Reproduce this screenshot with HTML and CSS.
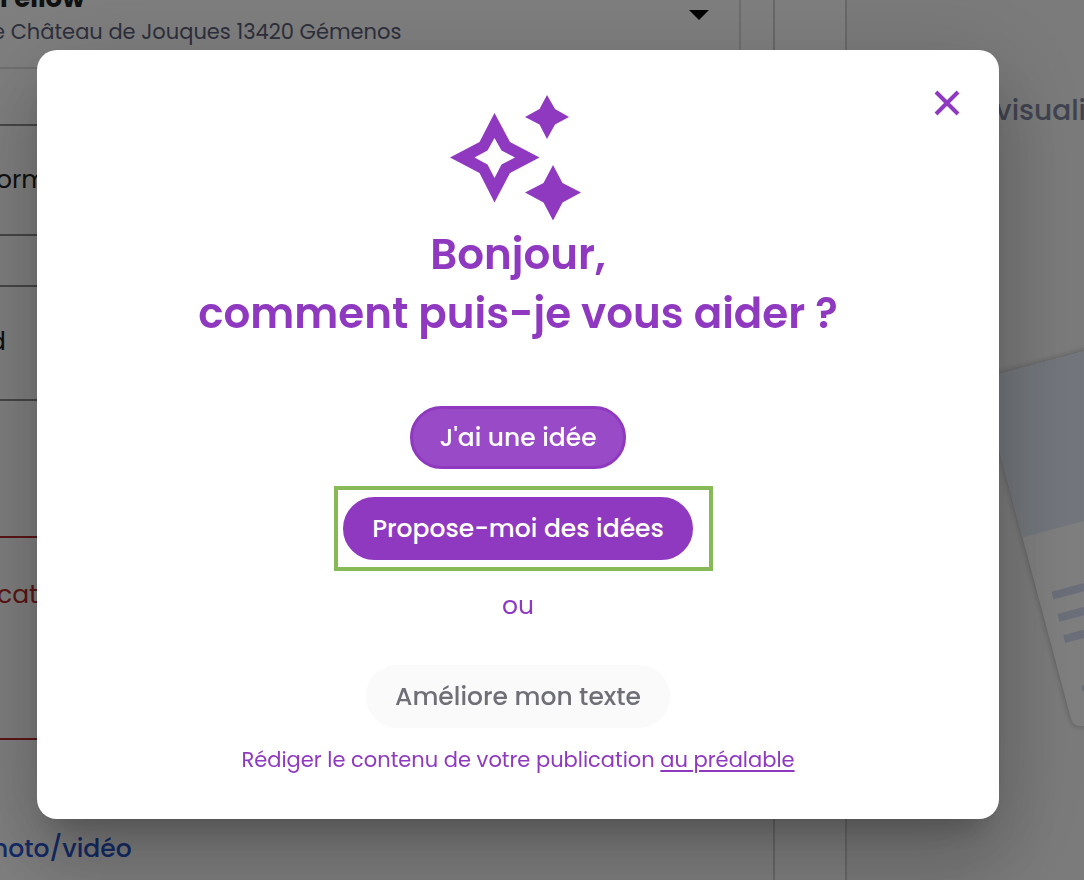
FILE: index.html
```
<!DOCTYPE html>
<html lang="fr">
<head>
  <meta charset="UTF-8">
  <title>Assistant de publication</title>
  <meta name="viewport" content="width=device-width, initial-scale=1.0">
  <link rel="stylesheet" href="styles.css">
</head>
<body>

<div class="page">
  <main class="editor">
    <div class="editor-column">
      <div class="place">
        <div class="place-text">
          <strong class="place-name">Fellow</strong>
          <span class="place-address">e Château de Jouques 13420 Gémenos</span>
        </div>
        <svg class="caret" viewBox="0 0 20 10" aria-hidden="true"><path d="M0 0h20L10 10z"/></svg>
      </div>
      <div class="field">orm</div>
      <div class="field field-short">d</div>
      <div class="field field-error">cat</div>
      <a class="add-media" href="#">hoto/vidéo</a>
    </div>
  </main>

  <aside class="preview">
    <h2 class="preview-title">visuali</h2>
    <svg class="preview-card" viewBox="0 0 237 440" aria-hidden="true">
      <g transform="translate(133 77) rotate(-15)">
        <rect class="card-sheet" width="300" height="362" rx="10"/>
        <path class="card-image" d="M0 164V10Q0 0 10 0H300V164z"/>
        <path class="card-line" d="M14 224h150v8H14zM14 247h150v8H14zM14 269h150v8H14z"/>
        <rect class="card-line" x="18" y="322" width="60" height="8" rx="4"/>
      </g>
    </svg>
  </aside>
</div>

<div class="overlay">
  <div class="dialog" role="dialog" aria-modal="true" aria-labelledby="dialog-title">
    <button class="close" type="button" aria-label="Fermer">
      <svg viewBox="0 0 26 26" aria-hidden="true"><path d="M2 2l22 22M24 2L2 24"/></svg>
    </button>

    <svg class="sparkles" viewBox="0 0 131 126" aria-hidden="true">
      <path fill-rule="evenodd" d="M44.500 18L60 47L89.500 62.500L60 78L44.500 107.500L29.500 78L0 62.500L29.500 47zM44.500 43L37.500 55.500L24.500 62.500L37.500 69.500L44.500 83L51.500 69.500L65 62.500L51.500 55.500z"/>
      <path d="M97 0L105 14L119 22L105 29.500L97 44L89.500 29.500L75 22L89.500 14z"/>
      <path d="M103 70L112.500 88L131 97.500L112.500 107.500L103 125.500L93.500 107.500L75 97.500L93.500 88z"/>
    </svg>

    <h1 class="title" id="dialog-title">Bonjour,<br>comment puis-je vous aider ?</h1>

    <button class="btn btn-focus" type="button">J'ai une idée</button>
    <div class="highlighted">
      <button class="btn" type="button">Propose-moi des idées</button>
    </div>
    <p class="or">ou</p>
    <button class="btn btn-disabled" type="button" disabled>Améliore mon texte</button>
    <p class="hint">Rédiger le contenu de votre publication <a href="#">au préalable</a></p>
  </div>
</div>

</body>
</html>
```
FILE: styles.css
```
* {
  box-sizing: border-box;
  margin: 0;
  padding: 0;
}
body {
  font-family: Poppins, Inter, sans-serif;
  font-size: 25px;
  line-height: 38px;
  color: #222;
  background: #fff;
  overflow: hidden;
}

/* Page behind the dialog */
.page {
  display: flex;
  height: 100vh;
  overflow: hidden;
}
.editor {
  flex: 0 0 78.1%;
  padding-right: 70px;
  border-right: 2px solid #d2d2d2;
}
.editor-column {
  height: 100%;
  padding-right: 32px;
  border-right: 2px solid #d2d2d2;
}
.place {
  display: flex;
  justify-content: space-between;
  height: 69px;
  padding-right: 30px;
  border: solid #dedede;
  border-width: 0 2px 2px 0;
}
.place-text {
  display: flex;
  flex-direction: column;
  margin: -21px 0 0 -8px;
}
.place-name {
  padding-left: 8px;
  font-size: 26px;
}
.place-address {
  font-size: 21px;
  line-height: 30px;
  color: #5b6078;
}
.caret {
  width: 20px;
  height: 10px;
  margin-top: 10px;
}
.field {
  margin: 55px 0 0 -4px;
  padding: 35px 0;
  border: solid #8c8c8c;
  border-width: 2px 0;
}
.field-short {
  margin: 49px 0 0 -11px;
  padding: 36px 0 38px;
}
.field-error {
  margin: 135px 0 0 -3px;
  padding: 38px 0 124px;
  border-color: #b72b2b;
  color: #b72b2b;
}
.add-media {
  display: block;
  margin: 90px 0 0 -8px;
  font-weight: 500;
  color: #2855cc;
  text-decoration: none;
}
.preview {
  flex: 1;
  min-width: 0;
  background: #f7f7f7;
}
.preview-title {
  padding: 92px 0 0 149px;
  font-size: 28px;
  font-weight: 500;
  color: #8088a0;
  white-space: nowrap;
}
.preview-card {
  display: block;
  width: 237px;
  margin-top: 172px;
}
.card-sheet {
  fill: #fff;
  filter: drop-shadow(0 0 3px rgba(0,0,0,0.3));
}
.card-image {
  fill: #e6effb;
}
.card-line {
  fill: #d6def5;
}

/* Dialog */
.overlay {
  position: fixed;
  inset: 0;
  display: flex;
  padding: 50px 85px 61px 37px;
  background: rgba(0,0,0,0.5);
}
.dialog {
  position: relative;
  flex: 1;
  display: flex;
  flex-direction: column;
  align-items: center;
  padding: 45px 40px;
  border-radius: 20px;
  background: #fff;
  color: #8f39c0;
  box-shadow: 0 22px 30px -14px rgba(0,0,0,0.2), 0 48px 76px 6px rgba(0,0,0,0.14), 0 18px 92px 16px rgba(0,0,0,0.12);
}
.close {
  position: absolute;
  top: 40px;
  right: 39px;
  width: 26px;
  height: 26px;
  border: none;
  background: none;
  cursor: pointer;
}
.close svg {
  display: block;
  fill: none;
  stroke: #8f39c0;
  stroke-width: 4;
}
.sparkles {
  flex: none;
  width: 131px;
  height: 126px;
  margin-right: 6px;
  fill: #8f39c0;
}
.title {
  margin-top: 4px;
  font-size: 42px;
  font-weight: 600;
  line-height: 59px;
  text-align: center;
}
.btn {
  flex: none;
  height: 63px;
  padding: 0 26px;
  border: 3px solid #8f39c0;
  border-radius: 32px;
  background: #8f39c0;
  color: #fff;
  font: 500 25px Poppins, Inter, sans-serif;
  cursor: pointer;
}
.btn-focus {
  margin-top: 63px;
  background: #994ac6;
}
.highlighted {
  position: relative;
  display: flex;
  margin-top: 28px;
}
.highlighted::after {
  content: "";
  position: absolute;
  inset: -11px -20px -11px -9px;
  border: 4px solid #87b957;
  pointer-events: none;
}
.or {
  margin-top: 27px;
}
.btn-disabled {
  margin-top: 40px;
  border-color: #fafafa;
  background: #fafafa;
  color: #6f7077;
  cursor: default;
}
.hint {
  margin-top: 13px;
  font-size: 21px;
}
.hint a {
  color: inherit;
  text-underline-offset: 3px;
}
```
